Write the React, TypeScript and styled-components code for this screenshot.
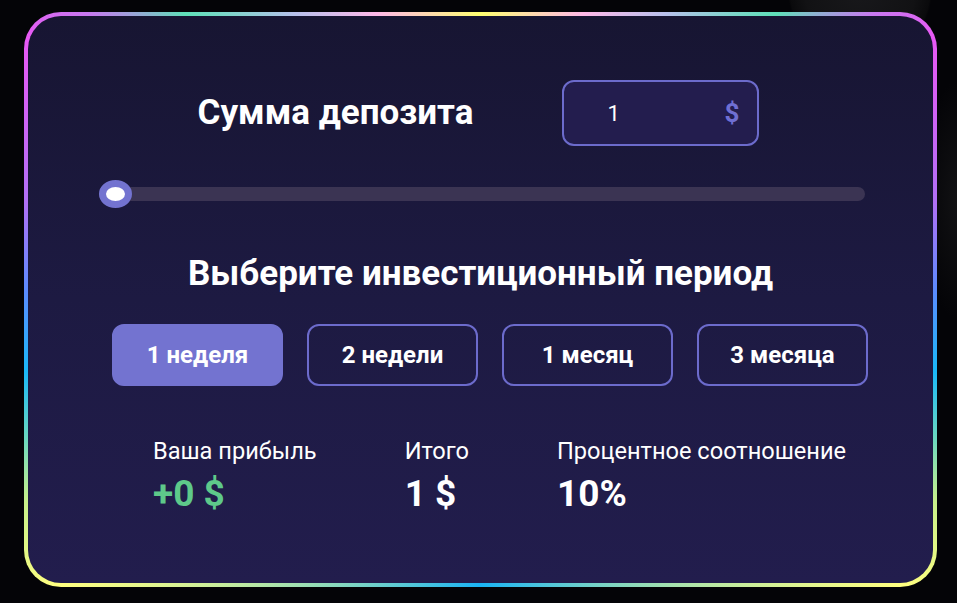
import React, { useState } from "react";
import styled, { createGlobalStyle } from "styled-components";

const Global = createGlobalStyle`
  html, body { margin: 0; padding: 0; }
  body {
    width: 957px;
    height: 603px;
    overflow: hidden;
    font-family: Roboto, "Noto Sans", "Liberation Sans", sans-serif;
    background:
      radial-gradient(circle at 860px -10px, #18181b 0, #121214 55px, #0a0a0c 70px, transparent 72px),
      radial-gradient(ellipse 40px 120px at 960px 200px, #121214 0, transparent 100%),
      #040407;
  }
`;

const Frame = styled.div`
  margin: 12px 0 0 24px;
  width: 913px;
  height: 575px;
  box-sizing: border-box;
  padding: 4px;
  border-radius: 37px;
  background: conic-gradient(
    from 0deg at 50% 50%,
    #ffff70 0deg,
    #ffb8e8 20deg,
    #b8c0ec 33deg,
    #5ee0b8 46deg,
    #c878f0 54deg,
    #e858f4 60deg,
    #b070f5 78deg,
    #5a8cff 89deg,
    #1ab8f8 99deg,
    #6ad8c0 107deg,
    #c8f08a 114deg,
    #ffff80 124deg,
    #1ab4f5 180deg,
    #ffff80 236deg,
    #c8f08a 246deg,
    #6ad8c0 253deg,
    #1ab8f8 261deg,
    #5a8cff 271deg,
    #b070f5 282deg,
    #e858f4 300deg,
    #c878f0 306deg,
    #5ee0b8 314deg,
    #b8c0ec 327deg,
    #ffb8e8 340deg,
    #ffff70 360deg
  );
`;

const Card = styled.div`
  height: 100%;
  box-sizing: border-box;
  border-radius: 33px;
  background: linear-gradient(180deg, #171532 0%, #1d1a42 50%, #221d4d 100%);
  display: flex;
  flex-direction: column;
  padding-top: 64px;
  color: #ffffff;
`;

const DepositRow = styled.div`
  display: flex;
  align-items: center;
  justify-content: center;
  gap: 89px;
  padding-right: 4px;
`;

const Title = styled.h2`
  margin: 0;
  font-size: 35px;
  font-weight: 700;
  line-height: 40px;
  color: #ffffff;
`;

const AmountBox = styled.div`
  width: 197px;
  height: 66px;
  box-sizing: border-box;
  border: 2px solid #6c6bcc;
  border-radius: 12px;
  background: #231d4e;
  display: flex;
  align-items: center;
  justify-content: space-between;
  padding: 0 18px 0 43px;
`;

const AmountValue = styled.span`
  font-size: 22px;
  font-weight: 400;
  color: #ffffff;
`;

const Currency = styled.span`
  font-size: 26px;
  font-weight: 700;
  color: #6f6fd3;
`;

const SliderWrap = styled.div`
  margin: 34px 0 0 71px;
  width: 766px;
  height: 28px;
  display: flex;
  align-items: center;
  position: relative;
`;

const Track = styled.div`
  width: 100%;
  height: 14px;
  border-radius: 7px;
  background: #3b3453;
`;

const Thumb = styled.div`
  position: absolute;
  left: 0;
  top: 0;
  width: 33px;
  height: 28px;
  box-sizing: border-box;
  border-radius: 50%;
  border: 7px solid #7373d0;
  background: #ffffff;
`;

const PeriodHeading = styled.div`
  margin-top: 46px;
  display: flex;
  justify-content: center;
`;

const PeriodRow = styled.div`
  margin: 30px 0 0 84px;
  display: flex;
  gap: 24px;
`;

const PeriodButton = styled.button<{ $active?: boolean }>`
  width: 171px;
  height: 62px;
  box-sizing: border-box;
  border-radius: 12px;
  border: 2px solid ${(p) => (p.$active ? "#7373d0" : "#6c6bcc")};
  background: ${(p) => (p.$active ? "#7373d0" : "transparent")};
  color: #ffffff;
  font-family: inherit;
  font-size: 24px;
  font-weight: 700;
  cursor: pointer;
  padding: 0;
`;

const Stats = styled.div`
  margin: 51px 0 0 125px;
  display: flex;
  gap: 88px;
`;

const Stat = styled.div`
  display: flex;
  flex-direction: column;
  gap: 8px;
`;

const StatLabel = styled.span`
  font-size: 23.6px;
  font-weight: 400;
  line-height: 28px;
  color: #ffffff;
`;

const StatValue = styled.span<{ $green?: boolean }>`
  font-size: 37px;
  font-weight: 700;
  line-height: 42px;
  color: ${(p) => (p.$green ? "#5ec98a" : "#ffffff")};
`;

const periods = ["1 неделя", "2 недели", "1 месяц", "3 месяца"];

export default function App() {
  const [active, setActive] = useState(0);
  return (
    <>
      <Global />
      <Frame>
        <Card>
          <DepositRow>
            <Title>Сумма депозита</Title>
            <AmountBox>
              <AmountValue>1</AmountValue>
              <Currency>$</Currency>
            </AmountBox>
          </DepositRow>
          <SliderWrap>
            <Track />
            <Thumb />
          </SliderWrap>
          <PeriodHeading>
            <Title>Выберите инвестиционный период</Title>
          </PeriodHeading>
          <PeriodRow>
            {periods.map((p, i) => (
              <PeriodButton key={p} $active={i === active} onClick={() => setActive(i)}>
                {p}
              </PeriodButton>
            ))}
          </PeriodRow>
          <Stats>
            <Stat>
              <StatLabel>Ваша прибыль</StatLabel>
              <StatValue $green>+0 $</StatValue>
            </Stat>
            <Stat>
              <StatLabel>Итого</StatLabel>
              <StatValue>1 $</StatValue>
            </Stat>
            <Stat>
              <StatLabel>Процентное соотношение</StatLabel>
              <StatValue>10%</StatValue>
            </Stat>
          </Stats>
        </Card>
      </Frame>
    </>
  );
}
